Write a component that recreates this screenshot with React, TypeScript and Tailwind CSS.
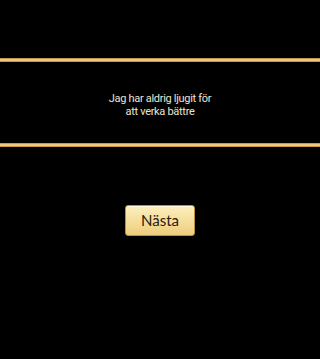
export default function App() {
  const line =
    "h-[4px] w-full bg-[linear-gradient(to_bottom,#b97f2c_0%,#f3d594_45%,#f3d594_55%,#b97f2c_100%)]";

  return (
    <div className="flex h-[359px] w-full flex-col bg-black font-['Roboto',sans-serif]">
      <div className="h-[58px]" />
      <div className={line} />
      <div className="flex h-[81px] items-center justify-center pt-[4px] text-center text-[11px] leading-[13px] tracking-[-0.3px] text-[#ebe4d0]">
        <p>
          Jag har aldrig ljugit för
          <br />
          att verka bättre
        </p>
      </div>
      <div className={line} />
      <div className="flex justify-center pt-[58px]">
        <button className="flex h-[31px] w-[70px] items-center justify-center rounded-[3px] border border-[#b8913e] bg-[linear-gradient(to_bottom,#fcefbf_0%,#f6df9c_50%,#edcd7e_100%)] font-['Lato',sans-serif] text-[15px] text-[#2a2010] shadow-[inset_0_1px_0_#fff8e0]">
          Nästa
        </button>
      </div>
    </div>
  );
}
